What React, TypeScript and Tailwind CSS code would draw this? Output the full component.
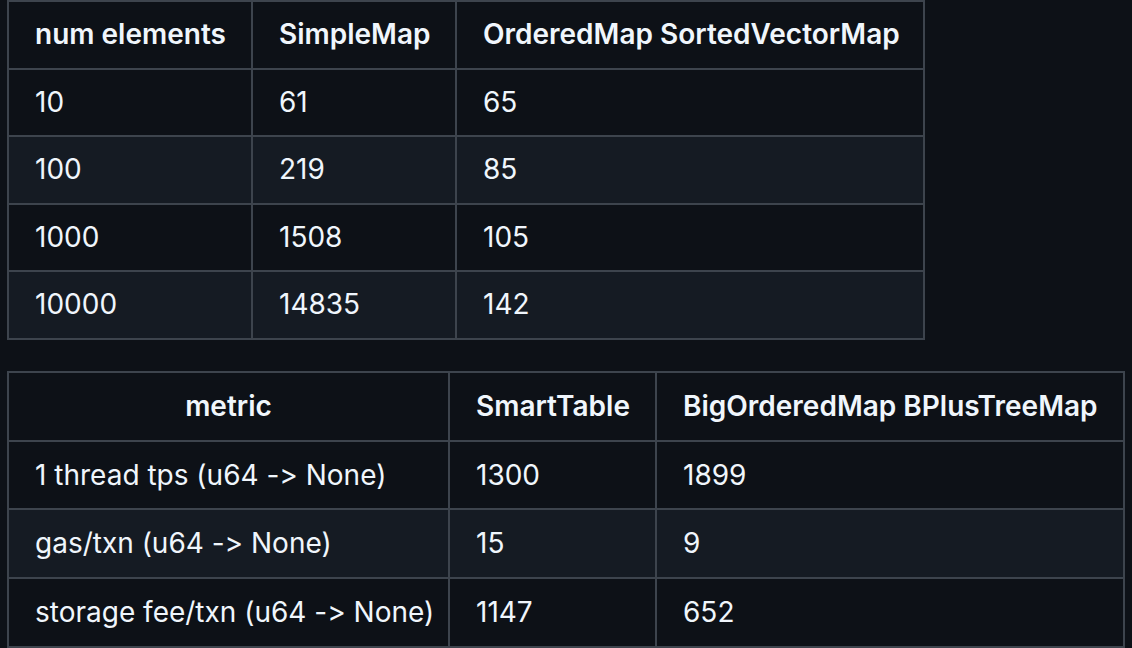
const mapRows = [
  ["10", "61", "65"],
  ["100", "219", "85"],
  ["1000", "1508", "105"],
  ["10000", "14835", "142"],
];

const metricRows = [
  ["1 thread tps (u64 -> None)", "1300", "1899"],
  ["gas/txn (u64 -> None)", "15", "9"],
  ["storage fee/txn (u64 -> None)", "1147", "652"],
];

const cell = "border-2 border-[#3d444d] px-[26px] py-[12px] text-[28px] whitespace-nowrap";

function DataTable({
  head,
  rows,
  widths,
  tableWidth,
  leading,
  centerFirst,
}: {
  head: string[];
  rows: string[][];
  widths: string[];
  tableWidth: string;
  leading: string;
  centerFirst?: boolean;
}) {
  return (
    <table className={`${tableWidth} table-fixed border-collapse text-[#f0f6fc]`}>
      <thead>
        <tr>
          {head.map((h, i) => (
            <th
              key={h}
              className={`${cell} ${leading} ${widths[i]} font-semibold ${i === 0 && centerFirst ? "text-center" : "text-left"}`}
            >
              {h}
            </th>
          ))}
        </tr>
      </thead>
      <tbody>
        {rows.map((r, ri) => (
          <tr key={ri} className={ri % 2 === 1 ? "bg-[#151b23]" : "bg-[#0d1117]"}>
            {r.map((c, ci) => (
              <td key={ci} className={`${cell} ${leading} text-left`}>
                {c}
              </td>
            ))}
          </tr>
        ))}
      </tbody>
    </table>
  );
}

export default function App() {
  return (
    <div
      className="min-h-[648px] w-[1132px] bg-[#0d1117] pl-[7px] flex flex-col items-start gap-[31px] [font-feature-settings:'calt'_0]"
      style={{ fontFamily: "Inter, 'Noto Sans', sans-serif" }}
    >
      <DataTable
        head={["num elements", "SimpleMap", "OrderedMap SortedVectorMap"]}
        rows={mapRows}
        widths={["w-[244px]", "w-[204px]", "w-[468px]"]}
        tableWidth="w-[918px]"
        leading="leading-[41.6px]"
      />
      <DataTable
        head={["metric", "SmartTable", "BigOrderedMap BPlusTreeMap"]}
        rows={metricRows}
        widths={["w-[441px]", "w-[207px]", "w-[468px]"]}
        tableWidth="w-[1116px]"
        leading="leading-[42.75px]"
        centerFirst
      />
    </div>
  );
}
